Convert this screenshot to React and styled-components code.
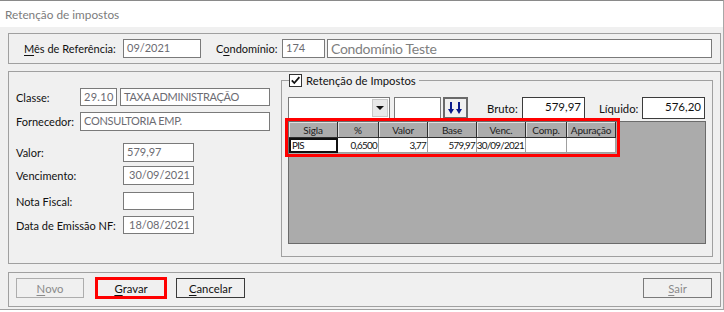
import React from 'react';
import styled, { createGlobalStyle } from 'styled-components';

const GlobalStyle = createGlobalStyle`
  html, body {
    margin: 0;
    padding: 0;
    background: #ffffff;
  }
  body {
    font-family: Lato, "Noto Sans", sans-serif;
    font-size: 11px;
    color: #1a1a1a;
  }
  * {
    box-sizing: border-box;
  }
`;

const columns = [
    { title: 'Sigla', w: 49 },
    { title: '%', w: 41 },
    { title: 'Valor', w: 49 },
    { title: 'Base', w: 49 },
    { title: 'Venc.', w: 49 },
    { title: 'Comp.', w: 41 },
    { title: 'Apuração', w: 49 },
];

const row = ['PIS', '0,6500', '3,77', '579,97', '30/09/2021', '', ''];

function ArrowsIcon () {
    return (
        <svg width="16" height="13" viewBox="0 0 16 13">
            <rect x="2" y="0" width="2" height="8" fill="#0a1a8c" />
            <polygon points="0,7 6,7 3,12" fill="#0a1a8c" />
            <rect x="10" y="0" width="2" height="8" fill="#0a1a8c" />
            <polygon points="8,7 14,7 11,12" fill="#0a1a8c" />
        </svg>
    );
}

function App () {
    return (
        <>
            <GlobalStyle />
            <Window>
                <TitleBar>Retenção de impostos</TitleBar>
                <Body>
                    <HeaderBox>
                        <Label $w={99}><Key>M</Key>ês de Referência:</Label>
                        <TextBox $w={78} $h={19}>09/2021</TextBox>
                        <Label $w={66} $ml={15}>C<Key>o</Key>ndomínio:</Label>
                        <TextBox $w={43} $h={19}>174</TextBox>
                        <TextBox $h={19} $big $ml={2}>Condomínio Teste</TextBox>
                    </HeaderBox>

                    <MainBox>
                        <LeftCol>
                            <Field $mt={16}>
                                <Label $w={64}>Classe:</Label>
                                <TextBox $w={37} $h={18} $spaced>29.10</TextBox>
                                <TextBox $w={150} $h={18} $ml={3} $tight>TAXA ADMINISTRAÇÃO</TextBox>
                            </Field>
                            <Field $mt={6}>
                                <Label $w={64}>Fornecedor:</Label>
                                <TextBox $w={190} $h={19} $wrap $tight>
                                    CONSULTORIA EMP.<br />INTEGRADA LTDA
                                </TextBox>
                            </Field>
                            <Field $mt={12}>
                                <Label $w={107}>Valor:</Label>
                                <TextBox $w={71} $h={19}>579,97</TextBox>
                            </Field>
                            <Field $mt={4}>
                                <Label $w={107}>Vencimento:</Label>
                                <TextBox $w={71} $h={19} $indent>30/09/2021</TextBox>
                            </Field>
                            <Field $mt={7}>
                                <Label $w={107}>Nota Fiscal:</Label>
                                <TextBox $w={71} $h={18}></TextBox>
                            </Field>
                            <Field $mt={6}>
                                <Label $w={107}>Data de Emissão NF:</Label>
                                <TextBox $w={71} $h={18} $indent>18/08/2021</TextBox>
                            </Field>
                        </LeftCol>

                        <GroupBox>
                            <Legend>
                                <CheckBox>
                                    <svg width="11" height="11" viewBox="0 0 11 11">
                                        <path d="M1.8 5.4 L4.3 8 L9.4 2.2" fill="none" stroke="#111" strokeWidth="1.8" />
                                    </svg>
                                </CheckBox>
                                Retenção de Impostos
                            </Legend>

                            <Controls>
                                <Combo>
                                    <DropButton />
                                </Combo>
                                <TextBox $w={47} $h={22} $ml={4}></TextBox>
                                <ArrowButton><ArrowsIcon /></ArrowButton>
                                <Label $w={35} $ml={19}>Bruto:</Label>
                                <ValueBox>579,97</ValueBox>
                                <Label $w={43} $ml={14}>Líquido:</Label>
                                <ValueBox>576,20</ValueBox>
                            </Controls>

                            <Grid>
                                <Table>
                                    {columns.map(c => (
                                        <HeadCell key={c.title}>{c.title}</HeadCell>
                                    ))}
                                    {row.map((v, i) => (
                                        <Cell key={i} $focus={i === 0}>{v}</Cell>
                                    ))}
                                </Table>
                            </Grid>
                        </GroupBox>
                    </MainBox>

                    <ButtonPanel>
                        <Button $w={68} $disabled><Key>N</Key>ovo</Button>
                        <Button $w={70} $ml={12} $marked><Key>G</Key>ravar</Button>
                        <Button $w={69} $ml={10} $dark><Key>C</Key>ancelar</Button>
                        <Button $w={69} $ml="auto" $disabled $dark><Key>S</Key>air</Button>
                    </ButtonPanel>
                </Body>
            </Window>
        </>
    );
}

const Window = styled.div`
    width: 724px;
    height: 310px;
    display: flex;
    flex-direction: column;
    background: #f0f0f0;
    border-top: 1px solid #8a8a8a;
    border-right: 1px solid #a8a8a8;
    border-bottom: 1px solid #a0a0a0;
    overflow: hidden;
`;

const TitleBar = styled.div`
    height: 26px;
    flex: none;
    display: flex;
    align-items: center;
    padding-left: 5px;
    background: #ffffff;
    color: #7c7c7c;
    font-size: 11.8px;
`;

const Body = styled.div`
    display: flex;
    flex-direction: column;
    padding: 6px 2px 0 8px;
`;

const HeaderBox = styled.div`
    height: 31px;
    display: flex;
    align-items: center;
    padding: 0 8px 0 15px;
    border: 1px solid #a0a0a0;
`;

const Key = styled.u`
    text-decoration: underline;
    text-underline-offset: 2px;
`;

const Label = styled.span`
    flex: none;
    width: ${p => p.$w}px;
    margin-left: ${p => p.$ml || 0}px;
    white-space: nowrap;
    color: #111;
`;

const TextBox = styled.div`
    flex: ${p => (p.$w ? 'none' : '1')};
    width: ${p => (p.$w ? `${p.$w}px` : 'auto')};
    height: ${p => p.$h}px;
    margin-left: ${p => p.$ml || 0}px;
    padding: ${p => (p.$big ? '0 3px' : `1px 3px 0 ${p.$indent ? 5 : 3}px`)};
    border: 1px solid #7a7a7a;
    background: #ffffff;
    color: ${p => (p.$big ? '#7f7f7f' : '#6b6b72')};
    font-size: ${p => (p.$big ? '14px' : '11px')};
    line-height: ${p => (p.$big ? '17px' : p.$wrap ? '13px' : '14px')};
    letter-spacing: ${p => (p.$spaced ? '0.3px' : p.$tight ? '-0.3px' : p.$big ? '-0.3px' : '0')};
    white-space: ${p => (p.$wrap ? 'normal' : 'nowrap')};
    overflow: hidden;
`;

const MainBox = styled.div`
    height: 193px;
    margin-top: 7px;
    display: flex;
    padding: 8px 7px 6px 0;
    border: 1px solid #a0a0a0;
`;

const LeftCol = styled.div`
    width: 272px;
    flex: none;
    display: flex;
    flex-direction: column;
    padding-left: 7px;
    margin-top: -8px;
`;

const Field = styled.div`
    display: flex;
    align-items: center;
    margin-top: ${p => p.$mt}px;
`;

const GroupBox = styled.div`
    position: relative;
    flex: 1;
    display: flex;
    flex-direction: column;
    padding: 16px 6px 12px 6px;
    border: 1px solid #a0a0a0;
`;

const Legend = styled.div`
    position: absolute;
    top: -8px;
    left: 7px;
    display: flex;
    align-items: center;
    gap: 4px;
    padding-right: 3px;
    background: #f0f0f0;
    font-size: 11.3px;
    line-height: 15px;
    color: #111;
`;

const CheckBox = styled.span`
    width: 13px;
    height: 13px;
    display: flex;
    align-items: center;
    justify-content: center;
    border: 1px solid #333333;
    background: #ffffff;
`;

const Controls = styled.div`
    height: 22px;
    display: flex;
    align-items: center;
    font-size: 11.3px;
`;

const Combo = styled.div`
    width: 102px;
    height: 22px;
    flex: none;
    display: flex;
    justify-content: flex-end;
    align-items: center;
    padding-right: 1px;
    border: 1px solid #7a7a7a;
    background: #ffffff;
`;

const DropButton = styled.span`
    width: 16px;
    height: 18px;
    display: flex;
    align-items: center;
    justify-content: center;
    background: #e8e8e8;
    border: 1px solid #c8c8c8;
    &::after {
        content: '';
        border-left: 4px solid transparent;
        border-right: 4px solid transparent;
        border-top: 4px solid #111;
    }
`;

const ArrowButton = styled.div`
    width: 25px;
    height: 22px;
    flex: none;
    margin-left: 2px;
    display: flex;
    align-items: center;
    justify-content: center;
    border: 2px solid #6a6a6a;
    background: #f0f0f0;
`;

const ValueBox = styled.div`
    width: 63px;
    height: 22px;
    flex: none;
    padding: 1px 3px 0;
    border: 1px solid #3c3c3c;
    background: #ffffff;
    text-align: right;
    font-size: 11.5px;
    line-height: 15px;
    color: #111;
`;

const Grid = styled.div`
    flex: 1;
    margin-top: 2px;
    border: 1px solid #6b6b6b;
    background: #ababab;
`;

const Table = styled.div`
    display: grid;
    grid-template-columns: ${columns.map(c => `${c.w}px`).join(' ')};
    width: max-content;
    outline: 3px solid #ff0000;
    outline-offset: 1px;
`;

const HeadCell = styled.div`
    height: 16px;
    display: flex;
    align-items: center;
    justify-content: center;
    border-right: 1px solid #2e2e2e;
    border-bottom: 1px solid #2e2e2e;
    box-shadow: inset 1px 1px 0 #e0e0e0;
    background: #acacac;
    font-size: 10px;
    letter-spacing: -0.2px;
    color: #1c1c1c;
    white-space: nowrap;
    overflow: hidden;
`;

const Cell = styled.div`
    height: 15px;
    display: flex;
    align-items: center;
    justify-content: ${p => (p.$focus ? 'flex-start' : 'flex-end')};
    padding: 0 ${p => (p.$focus ? 3 : 1)}px;
    background: #ffffff;
    border-right: 1px solid #a0a0a0;
    border-bottom: 1px solid #a0a0a0;
    outline: ${p => (p.$focus ? '2px solid #111' : 'none')};
    outline-offset: -2px;
    font-size: 9.8px;
    letter-spacing: -0.7px;
    color: #111;
    white-space: nowrap;
    overflow: hidden;
`;

const ButtonPanel = styled.div`
    height: 35px;
    margin-top: 8px;
    display: flex;
    align-items: flex-start;
    padding: 5px 8px 0 7px;
    border: 1px solid #a0a0a0;
`;

const Button = styled.div`
    width: ${p => p.$w}px;
    height: 20px;
    flex: none;
    margin-left: ${p => (p.$ml === 'auto' ? 'auto' : `${p.$ml || 0}px`)};
    display: flex;
    align-items: center;
    justify-content: center;
    border: 1px solid ${p => (p.$dark ? (p.$disabled ? '#7a7a7a' : '#3a3a3a') : '#adadad')};
    background: #f0f0f0;
    color: ${p => (p.$disabled ? '#8a8a8a' : '#111')};
    font-size: 11.3px;
    outline: ${p => (p.$marked ? '3px solid #ff0000' : 'none')};
    outline-offset: -2px;
`;

export default App;
